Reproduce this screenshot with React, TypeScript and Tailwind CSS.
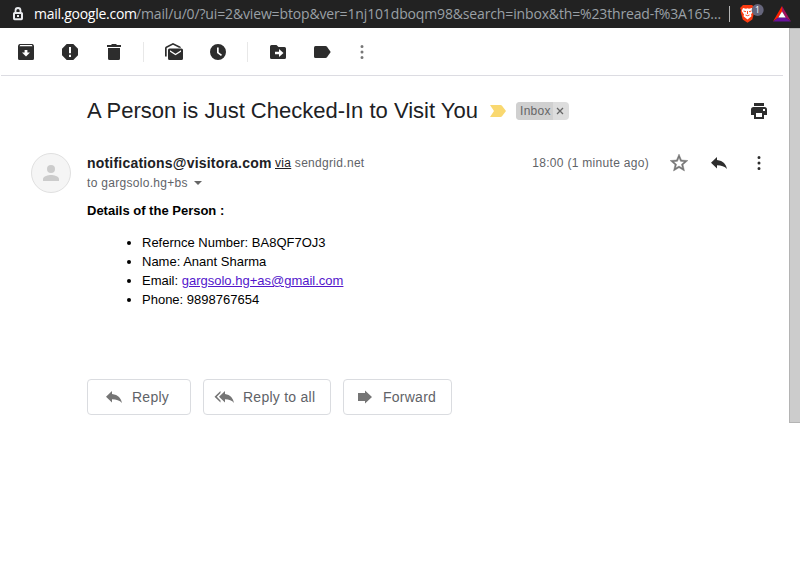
import React from 'react';

type IconProps = { d: string; className?: string; box?: string };

function Icon({ d, className = 'text-[#2d2d2d]', box = '0 0 20 20' }: IconProps) {
  return (
    <svg viewBox={box} className={`block size-5 shrink-0 ${className}`} fill="currentColor">
      <path fillRule="evenodd" d={d} />
    </svg>
  );
}

const MATERIAL = '0.75 0.75 22.5 22.5';

const icons = {
  archive:
    'M3.800 2h12.400Q17 2 17.500 2.800L18 4V16.500a1.500 1.500 0 0 1-1.500 1.500h-13A1.500 1.500 0 0 1 2 16.500V4L2.500 2.800Q3 2 3.800 2zM4.200 3L3.500 4.200H16.500L15.800 3zM8.600 8V10.500H6L10 14.500L14 10.500H11.400V8z',
  report: 'M6.700 2h6.600L18 6.700v6.600L13.300 18H6.700L2 13.300V6.700zM9 5v6.200h2V5zM9 12.800v2.200h2v-2.200z',
  trash: 'M3 3h4l1-1h4l1 1h4v2H3zM4 6h12v10.500a1.500 1.500 0 0 1-1.500 1.500h-9A1.500 1.500 0 0 1 4 16.500z',
  unread:
    'M1 14.500V6.200Q1 5 2 4.500L9 1L16.200 4.600Q16.800 5 17 5.700H15L9 2.800L2.700 5.900V14.500zM5.500 6.500h12A1.500 1.500 0 0 1 19 8v8.500a1.500 1.500 0 0 1-1.500 1.500h-12A1.500 1.500 0 0 1 4 16.500V8a1.500 1.500 0 0 1 1.500-1.500zM6 8.200v1.500l5.500 3.600l5.500-3.600V8.200L11.500 11.800z',
  clock: 'M10 2a8 8 0 1 0 0 16a8 8 0 1 0 0-16zM9 5.500h1.700v4.700l3.300 2.500l-1 1.300L9 11z',
  move: 'M3.500 3h5l2 2h6A1.500 1.500 0 0 1 18 6.500v9a1.500 1.500 0 0 1-1.500 1.500h-13A1.500 1.500 0 0 1 2 15.500v-11A1.500 1.500 0 0 1 3.500 3zM11 7v2.700H7v2.600h4V15l4.500-4z',
  label: 'M3.500 4H13.500Q14.500 4 15 4.700L18.700 10L15 15.300Q14.500 16 13.500 16H3.500Q2 16 2 14.500V5.500Q2 4 3.500 4z',
  more: 'M10 3a1.500 1.500 0 1 0 0 3a1.500 1.500 0 1 0 0-3zM10 8.500a1.500 1.500 0 1 0 0 3a1.500 1.500 0 1 0 0-3zM10 14a1.500 1.500 0 1 0 0 3a1.500 1.500 0 1 0 0-3z',
  print: 'M5 2h10v3H5zM4.500 6h11A2.500 2.500 0 0 1 18 8.500V14h-3v4H5v-4H2V8.500A2.500 2.500 0 0 1 4.500 6zM7 12v4h6v-4zM14 8v2h2V8z',
  star: 'M22 9.240l-7.190-.62L12 2 9.190 8.630 2 9.240l5.460 4.730L5.820 21 12 17.270 18.180 21l-1.630-7.030L22 9.240zM12 15.400l-3.760 2.270 1-4.280-3.320-2.880 4.380-.38L12 6.100l1.710 4.040 4.380.38-3.320 2.880 1 4.280L12 15.400z',
  reply: 'M8 7V4L2 9.800L8 15.500V12.300C12.400 12.300 15.600 13.400 18 16C17.200 11.600 14.200 7.700 8 7z',
  replyAll:
    'M6.500 6V4L0.500 9.800L6.500 15.500V13.500L2.800 9.800zM11 7V4L5 9.800L11 15.500V12.300C15 12.300 18 13.400 20 16C19.200 11.600 16.500 7.700 11 7z',
  forward: 'M3 6h7V3.500L17 10L10 16.500V14H3z',
};

function Divider() {
  return <span className="ml-[19px] mr-5 h-5 w-px shrink-0 bg-[#e8e8e8]" />;
}

function AddressBar() {
  return (
    <header className="flex h-7 items-center bg-[#222222] pl-3">
      <svg viewBox="0 0 12 14" className="h-[14px] w-3 shrink-0" fill="none" stroke="#e8eaed">
        <path d="M3.500 6V3.500a2.500 2.500 0 0 1 5 0V6" strokeWidth="1.800" />
        <rect x="2" y="6" width="8" height="6.200" rx=".6" strokeWidth="2" />
        <path d="M5 9.100h2" strokeWidth="2" />
      </svg>
      <div className="ml-[10px] flex w-[695px] shrink-0 whitespace-nowrap font-['Open_Sans','Noto_Sans',sans-serif] text-[14px] leading-[28px] text-[#9aa0a6]">
        <span className="w-[102px] shrink-0 tracking-[-0.26px] text-white">mail.google.com</span>
        <span className="tracking-[-0.147px]">/mail/u/0/?ui=2&amp;view=btop&amp;ver=1nj101dboqm98&amp;search=inbox&amp;th=%23thread-f%3A165…</span>
      </div>
      <span className="h-4 w-px shrink-0 bg-[#b5b5b5]" />
      <svg viewBox="0 0 26 20" className="ml-[9px] h-5 w-[26px] shrink-0">
        <path d="M4 1h9l3 3-1 2 .3 2-2 7.500-4.800 3.200-4.800-3.200L1.700 8 2 6 1 4z" fill="#fb3b10" />
        <path d="M4 4l3 .7 1.500-.5 1.500.5 3-.7 1.300 3-2.300 3.500.5 1.800-4 3.200-4-3.200.5-1.800L2.700 7z" fill="#fff" />
        <path d="M4.500 7l2.500.7M12.500 7l-2.500.7M8.500 7v3M6.500 11l2 .7 2-.7" stroke="#fb4a24" fill="none" />
        <circle cx="18.700" cy="6" r="6" fill="#66667c" />
        <text x="18.500" y="9" textAnchor="middle" fill="#fff" className="font-['Open_Sans',sans-serif] text-[8.500px]">1</text>
      </svg>
      <svg viewBox="0 0 18 16" className="ml-2 h-4 w-[18px] shrink-0">
        <path d="M9 0L0 15.500L5.300 11.500L9 5.500z" fill="#ff2000" />
        <path d="M9 0L18 15.500L12.700 11.500L9 5.500z" fill="#a3125f" />
        <path d="M0 15.500H18L12.700 11.500H5.300z" fill="#68119c" />
        <path d="M9 5.500L12.700 11.500H5.300z" fill="#fff" />
      </svg>
    </header>
  );
}

function Toolbar() {
  return (
    <nav className="ml-px flex h-12 w-[782px] items-center border-b border-[#dcdce2] pl-[15px]">
      <div className="flex gap-6">
        <Icon d={icons.archive} />
        <Icon d={icons.report} />
        <Icon d={icons.trash} />
      </div>
      <Divider />
      <div className="flex gap-6">
        <Icon d={icons.unread} />
        <Icon d={icons.clock} />
      </div>
      <Divider />
      <div className="flex gap-6">
        <Icon d={icons.move} />
        <Icon d={icons.label} />
      </div>
      <Icon d={icons.more} className="ml-5 text-[#777777]" />
    </nav>
  );
}

function ActionButton({ d, label, className }: { d: string; label: string; className: string }) {
  return (
    <button className={`flex h-9 items-center rounded-[4px] border border-[#dadce0] text-[14px] tracking-[0.25px] text-[#5f6368] ${className}`}>
      <Icon d={d} className="text-[#757575]" />
      <span>{label}</span>
    </button>
  );
}

export default function App() {
  return (
    <div className="h-[566px] w-[800px] overflow-hidden bg-white font-['Liberation_Sans',Arial,sans-serif] text-[#222222]">
      <AddressBar />
      <div className="flex justify-between">
        <main className="w-[783px]">
          <Toolbar />
          <div className="mt-5 flex h-[30px] items-center pl-[87px]">
            <h1 className="w-[391px] whitespace-nowrap text-[22px] leading-[30px] text-[#202124]">A Person is Just Checked-In to Visit You</h1>
            <svg viewBox="0 0 16 12" className="ml-3 h-3 w-4" fill="#f9d870">
              <path d="M0 0H10.500Q11.500 0 12 .8L16 6L12 11.200Q11.500 12 10.500 12H0L4 6z" />
            </svg>
            <div className="ml-[10px] flex h-[18px] w-[53px] overflow-hidden rounded-[4px] bg-[#dddddd] text-[12px] leading-[18px] tracking-[0.3px] text-[#666666]">
              <span className="w-[37px] bg-[#d0d0d0] pl-1">Inbox</span>
              <svg viewBox="0 0 16 18" className="h-[18px] w-4" stroke="#666666" strokeWidth="1.300">
                <path d="M4 6l6 6M10 6l-6 6" />
              </svg>
            </div>
            <Icon d={icons.print} className="ml-auto mr-[14px] text-[#2d2d2d]" />
          </div>

          <div className="mt-[27px] flex h-10">
            <div className="ml-[31px] flex size-10 items-center justify-center rounded-full border border-[#e0e0e0] bg-[#f5f5f5]">
              <svg viewBox="0 0 16 16" className="size-4" fill="#cccccc">
                <circle cx="8" cy="4" r="4" />
                <path d="M0 16.500v-2.500c0-2.700 5.300-4 8-4s8 1.300 8 4v2.500z" />
              </svg>
            </div>
            <div className="ml-4 flex-1 whitespace-nowrap text-[12px] text-[#5f6368]">
              <div className="flex h-5 items-center leading-5 tracking-[0.3px]">
                <span className="w-[188px] text-[14px] font-bold tracking-[0.2px] text-[#202124]">notifications@visitora.com</span>
                <span className="text-[#202124] underline">via</span>
                <span className="ml-[3.6px]">sendgrid.net</span>
              </div>
              <div className="flex h-5 items-center leading-5 tracking-[0.3px]">
                <span>to gargsolo.hg+bs</span>
                <span className="ml-[6px] border-x-4 border-t-4 border-x-transparent border-t-[#666666]" />
              </div>
            </div>
            <div className="mr-[14px] flex h-5 items-center">
              <span className="mr-5 text-[12px] tracking-[0.3px] text-[#5f6368]">18:00 (1 minute ago)</span>
              <Icon d={icons.star} box={MATERIAL} className="mr-5 stroke-[#777777] stroke-[0.5] text-[#777777]" />
              <Icon d={icons.reply} className="mr-5 text-[#2d2d2d]" />
              <Icon d={icons.more} />
            </div>
          </div>

          <article className="ml-[87px] mt-2 text-[13px] leading-[19px] text-black">
            <p className="font-bold">Details of the Person :</p>
            <ul className="mt-[13px] list-disc pl-[55px]">
              <li>Refernce Number: BA8QF7OJ3</li>
              <li>Name: Anant Sharma</li>
              <li>Email: <a className="text-[#5316cc] underline">gargsolo.hg+as@gmail.com</a></li>
              <li>Phone: 9898767654</li>
            </ul>
          </article>

          <div className="ml-[87px] mt-[70px] flex gap-3">
            <ActionButton d={icons.reply} label="Reply" className="w-[104px] gap-2 pl-4" />
            <ActionButton d={icons.replyAll} label="Reply to all" className="w-[128px] gap-[9px] pl-[10px]" />
            <ActionButton d={icons.forward} label="Forward" className="w-[109px] gap-2 pl-[11px]" />
          </div>
        </main>
        <div className="h-[395px] w-[11px] border-b border-l border-t border-[#b4b4b4] bg-[#cccccc]" />
      </div>
    </div>
  );
}
